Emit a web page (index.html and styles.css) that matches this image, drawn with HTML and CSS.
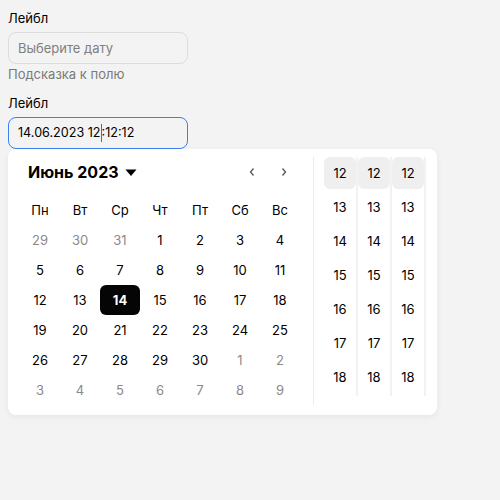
FILE: index.html
```html
<!DOCTYPE html>
<html lang="ru">
<head>
<meta charset="utf-8">
<link rel="stylesheet" href="styles.css">
</head>
<body>
<div class="field">
  <div class="label">Лейбл</div>
  <div class="input"><span class="placeholder">Выберите дату</span></div>
  <div class="hint">Подсказка к полю</div>
</div>
<div class="field field-active">
  <div class="label">Лейбл</div>
  <div class="input input-focus"><span>14.06.2023 12</span><span class="caret"></span><span>:12:12</span></div>
  <div class="popup">
    <div class="calendar">
      <div class="cal-header">
        <div class="title">Июнь 2023
          <svg class="tri" width="12" height="8" viewBox="0 0 12 8"><path d="M0.5 0.5h11L6 7z" fill="#000"/></svg>
        </div>
        <div class="nav">
          <button class="nav-btn"><svg width="6" height="10" viewBox="0 0 6 10"><path d="M4.5 1.5L1.5 5l3 3.5" fill="none" stroke="#555" stroke-width="1.3"/></svg></button>
          <button class="nav-btn"><svg width="6" height="10" viewBox="0 0 6 10"><path d="M1.5 1.5L4.5 5l-3 3.5" fill="none" stroke="#555" stroke-width="1.3"/></svg></button>
        </div>
      </div>
      <div class="grid">
        <div class="wd">Пн</div><div class="wd">Вт</div><div class="wd">Ср</div><div class="wd">Чт</div><div class="wd">Пт</div><div class="wd">Сб</div><div class="wd">Вс</div>
        <div class="d out">29</div><div class="d out">30</div><div class="d out">31</div><div class="d">1</div><div class="d">2</div><div class="d">3</div><div class="d">4</div>
        <div class="d">5</div><div class="d">6</div><div class="d">7</div><div class="d">8</div><div class="d">9</div><div class="d">10</div><div class="d">11</div>
        <div class="d">12</div><div class="d">13</div><div class="d sel">14</div><div class="d">15</div><div class="d">16</div><div class="d">17</div><div class="d">18</div>
        <div class="d">19</div><div class="d">20</div><div class="d">21</div><div class="d">22</div><div class="d">23</div><div class="d">24</div><div class="d">25</div>
        <div class="d">26</div><div class="d">27</div><div class="d">28</div><div class="d">29</div><div class="d">30</div><div class="d out">1</div><div class="d out">2</div>
        <div class="d out">3</div><div class="d out">4</div><div class="d out">5</div><div class="d out">6</div><div class="d out">7</div><div class="d out">8</div><div class="d out">9</div>
      </div>
    </div>
    <div class="divider"></div>
    <div class="time">
      <div class="tcol">
        <div class="t cur">12</div><div class="t">13</div><div class="t">14</div><div class="t">15</div><div class="t">16</div><div class="t">17</div><div class="t">18</div>
        <span class="thumb thumb-a"></span>
      </div>
      <div class="tcol">
        <div class="t cur">12</div><div class="t">13</div><div class="t">14</div><div class="t">15</div><div class="t">16</div><div class="t">17</div><div class="t">18</div>
        <span class="thumb thumb-b"></span>
      </div>
      <div class="tcol">
        <div class="t cur">12</div><div class="t">13</div><div class="t">14</div><div class="t">15</div><div class="t">16</div><div class="t">17</div><div class="t">18</div>
        <span class="thumb thumb-b"></span>
      </div>
    </div>
  </div>
</div>
</body>
</html>
```
FILE: styles.css
```css
* { box-sizing: border-box; }
html, body { margin: 0; }
body {
  background: #f3f3f3;
  padding: 8px;
  font-family: Inter, "Noto Sans", sans-serif;
  font-size: 13px;
  color: #000;
}
.field { display: flex; flex-direction: column; }
.label { line-height: 20px; margin-bottom: 4px; }
.input {
  width: 180px;
  height: 32px;
  border: 1px solid #dcdcdc;
  border-radius: 8px;
  padding: 0 9px;
  display: flex;
  align-items: center;
  line-height: 20px;
}
.placeholder { color: #808080; }
.hint { color: #7a7a7a; line-height: 20px; margin-bottom: 9px; }
.input-focus { border-color: #3b7ff0; font-size: 12.6px; }
.caret { display: inline-block; width: 1px; height: 18px; background: #2f6fe8; }
.popup {
  width: 429px;
  background: #fff;
  border-radius: 8px;
  box-shadow: 0 2px 6px rgba(0,0,0,0.06);
  display: flex;
  padding: 8px 0 10px;
}
.calendar { padding-left: 12px; width: 305px; }
.cal-header {
  width: 280px;
  height: 30px;
  display: flex;
  align-items: center;
  justify-content: space-between;
  padding-left: 8px;
  margin-bottom: 8px;
}
.title {
  font-size: 16px;
  font-weight: 700;
  display: flex;
  align-items: center;
  gap: 6px;
}
.tri { margin-top: 1px; }
.nav { display: flex; }
.nav-btn {
  width: 32px; height: 30px;
  border: 0; background: none; padding: 0;
  display: flex; align-items: center; justify-content: center;
}
.grid { display: grid; grid-template-columns: repeat(7, 40px); grid-auto-rows: 30px; }
.wd, .d { display: flex; align-items: center; justify-content: center; }
.out { color: #8a8a8a; }
.sel { background: #050505; color: #fff; font-weight: 700; border-radius: 6px; }
.divider { width: 1px; background: #ececec; }
.time { display: flex; padding-left: 10px; height: 239px; }
.tcol {
  position: relative;
  width: 34px;
  height: 239px;
  overflow: hidden;
  border-right: 2px solid #f2f2f2;
  display: flex;
  flex-direction: column;
  gap: 2px;
}
.t {
  flex: none;
  height: 32px;
  width: 32px;
  display: flex; align-items: center; justify-content: center;
  border-radius: 6px;
}
.cur { background: #efefef; }
.thumb { position: absolute; right: -2px; width: 2px; background: #d2d2d2; }
.thumb-a { top: 132px; height: 75px; }
.thumb-b { top: 58px; height: 30px; }
```
